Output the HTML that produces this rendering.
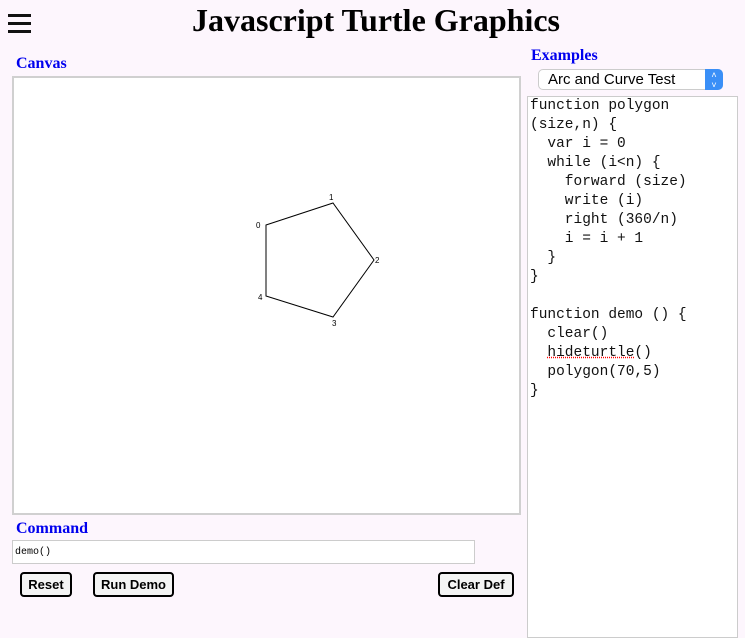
<!DOCTYPE html><html><head><style>
body{margin:0;background:#fdf6fd;width:745px;height:625px;overflow:hidden;position:relative;font-family:"Liberation Serif",serif}
.a{position:absolute}
h1{position:absolute;left:0;width:752px;text-align:center;top:2px;margin:0;font-size:32px;font-weight:bold}
.lbl{color:#0000ee;font-weight:bold;font-size:16px}
.btn{position:absolute;top:572px;height:25px;border:2px solid #000;border-radius:4px;background:#f4f4f4;font:bold 13px "Liberation Sans",sans-serif;display:flex;align-items:center;justify-content:center;box-sizing:border-box}
pre{margin:0;font:14.5px/19px "Liberation Mono",monospace;color:#111}
</style></head><body>
<div class="a" style="left:8px;top:14px;width:23px;height:3px;background:#111"></div>
<div class="a" style="left:8px;top:22px;width:23px;height:3px;background:#111"></div>
<div class="a" style="left:8px;top:30px;width:23px;height:3px;background:#111"></div>
<h1>Javascript Turtle Graphics</h1>
<div class="a lbl" style="left:16px;top:55px">Canvas</div>
<div class="a lbl" style="left:531px;top:47px">Examples</div>
<div class="a" style="left:538px;top:69px;width:185px;height:21px;background:#fff;border:1px solid #ccc;border-radius:5px;box-sizing:border-box;font:15px 'Liberation Sans',sans-serif;padding:1px 0 0 9px">Arc and Curve Test</div>
<div class="a" style="left:705px;top:69px;width:18px;height:21px;background:#3a8ff7;border-radius:0 5px 5px 0;color:#fff;font:9px sans-serif;text-align:center;line-height:10px;padding-top:1px;box-sizing:border-box">˄<br>˅</div>
<div class="a" style="left:12px;top:76px;width:509px;height:439px;background:#fff;border:2px solid #d0d0d0;box-sizing:border-box"></div>
<svg class="a" style="left:0;top:0" width="745" height="625"><polygon points="266,225 333,203 374,260 333,317 266,296" fill="none" stroke="#000" stroke-width="1"/>
<g font-family="Liberation Sans" font-size="8"><text x="256" y="228">0</text><text x="329" y="200">1</text><text x="375" y="263">2</text><text x="332" y="326">3</text><text x="258" y="300">4</text></g></svg>
<div class="a" style="left:527px;top:96px;width:209px;height:540px;background:#fff;border:1px solid #ccc"></div>
<pre class="a" style="left:530px;top:97px">function polygon
(size,n) {
  var i = 0
  while (i&lt;n) {
    forward (size)
    write (i)
    right (360/n)
    i = i + 1
  }
}

function demo () {
  clear()
  <span style="text-decoration:underline dotted red">hideturtle</span>()
  polygon(70,5)
}</pre>
<div class="a lbl" style="left:16px;top:520px">Command</div>
<div class="a" style="left:12px;top:540px;width:463px;height:24px;background:#fff;border:1px solid #ccc;box-sizing:border-box;font:10px 'Liberation Mono',monospace;padding:6px 0 0 2px">demo()</div>
<div class="btn" style="left:20px;width:52px">Reset</div>
<div class="btn" style="left:93px;width:81px">Run Demo</div>
<div class="btn" style="left:438px;width:76px">Clear Def</div>
</body></html>
